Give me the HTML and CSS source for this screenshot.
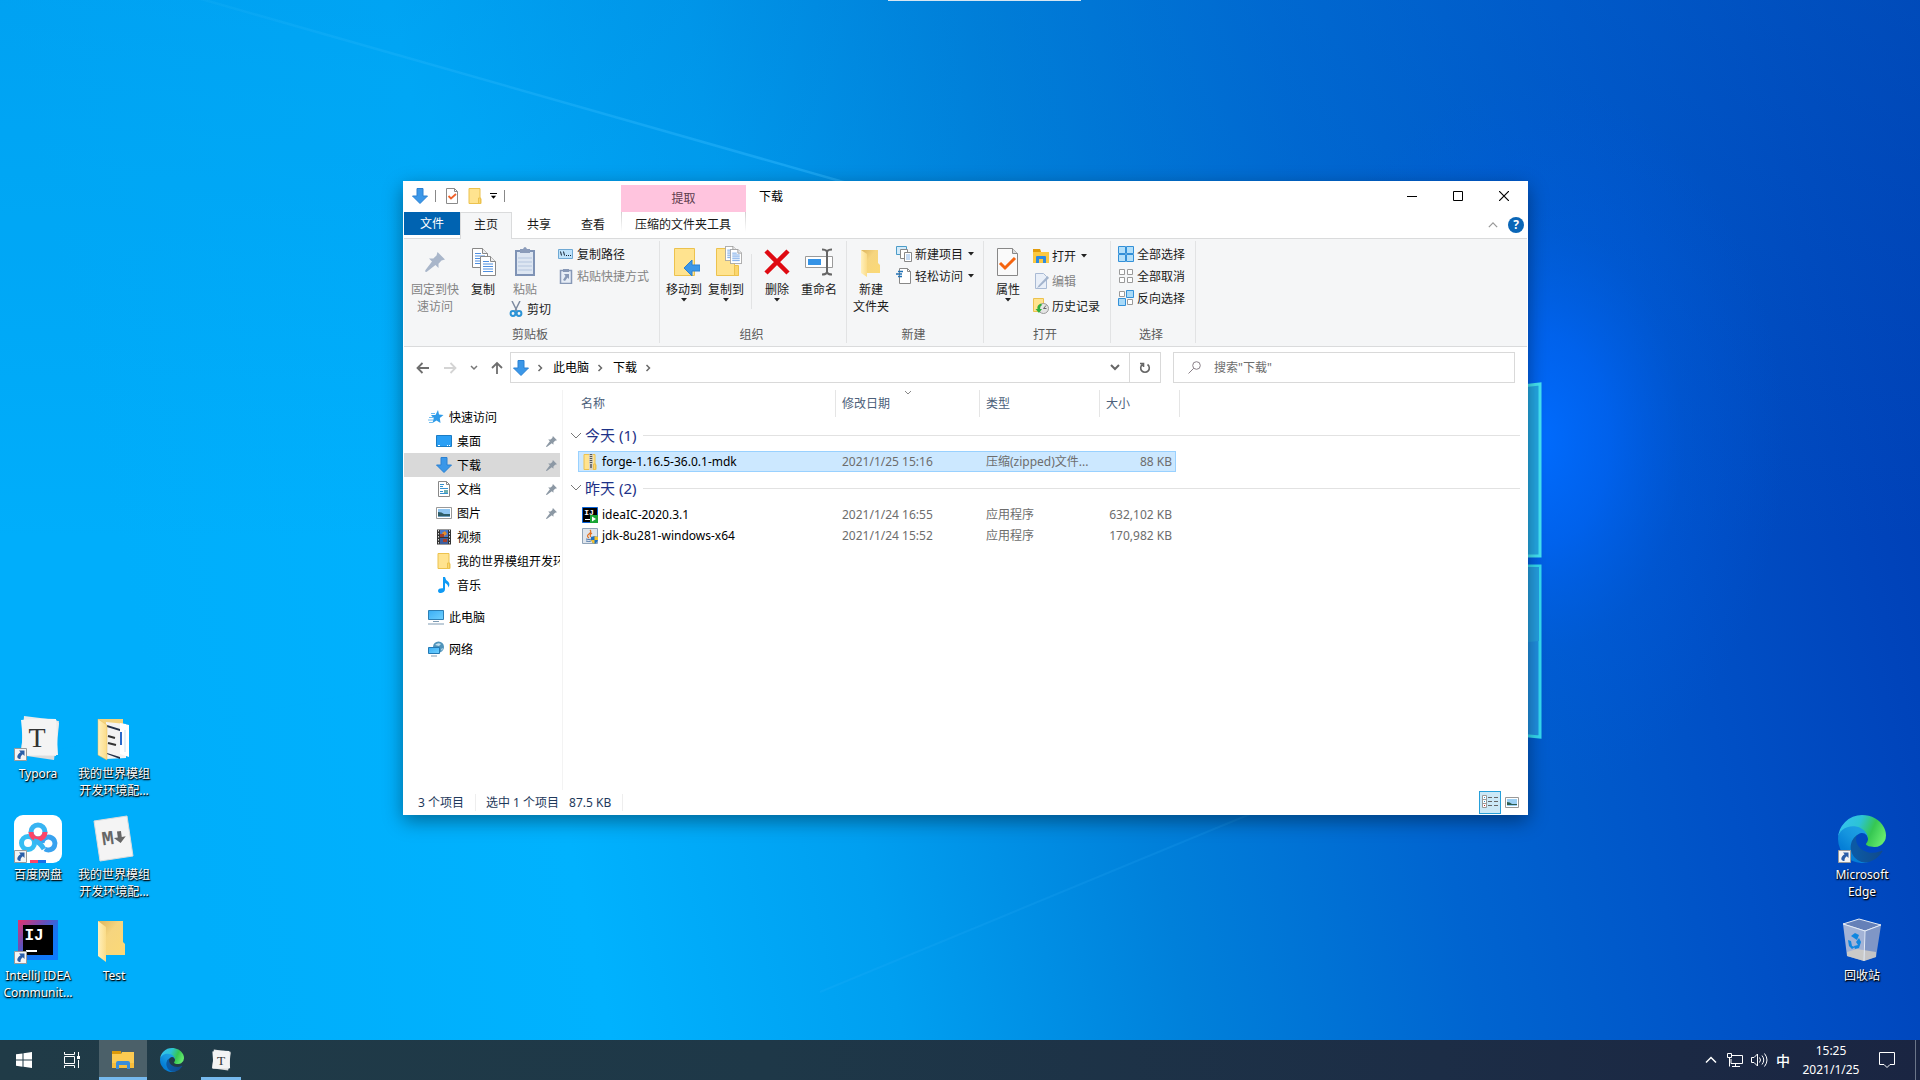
FILE: index.html
```html
<!DOCTYPE html>
<html lang="zh-CN">
<head>
    <meta charset="UTF-8">
    <meta name="viewport" content="width=device-width, initial-scale=1.0">
    <title>下载</title>
    <link rel="stylesheet" href="styles.css">
</head>
<body>

    <!-- Shared icons -->
    <svg class="defs" aria-hidden="true">
        <defs>
            <linearGradient id="gFolderFront" x1="0" y1="0" x2="1" y2="0">
                <stop offset="0" stop-color="#fff0bd"/><stop offset="1" stop-color="#fbdc88"/>
            </linearGradient>
            <linearGradient id="gFolderBack" x1="0" y1="0" x2="1" y2="1">
                <stop offset="0" stop-color="#dcb45c"/><stop offset="0.4" stop-color="#f6d57f"/><stop offset="1" stop-color="#fbd976"/>
            </linearGradient>
            <linearGradient id="gEdge1" x1="0.2" y1="0.5" x2="1" y2="0.5">
                <stop offset="0" stop-color="#0c59a4"/><stop offset="1" stop-color="#114a8b"/>
            </linearGradient>
            <linearGradient id="gEdge2" x1="0.8" y1="0.3" x2="0.3" y2="1">
                <stop offset="0" stop-color="#1b9de2"/><stop offset="0.3" stop-color="#1595df"/><stop offset="0.7" stop-color="#0680d7"/><stop offset="1" stop-color="#0078d4"/>
            </linearGradient>
            <linearGradient id="gEdge3" x1="0" y1="0.3" x2="1" y2="0.6">
                <stop offset="0" stop-color="#35c1f1"/><stop offset="0.4" stop-color="#2cc3d5"/><stop offset="0.7" stop-color="#36c752"/><stop offset="1" stop-color="#66eb6e"/>
            </linearGradient>
            <linearGradient id="gScreen" x1="0" y1="0" x2="1" y2="1">
                <stop offset="0" stop-color="#3aaef5"/><stop offset="1" stop-color="#6fd0ff"/>
            </linearGradient>
            <linearGradient id="gIdea" x1="0" y1="0" x2="1" y2="1">
                <stop offset="0" stop-color="#e8326b"/><stop offset="0.35" stop-color="#6a4fb8"/><stop offset="0.6" stop-color="#1675f0"/><stop offset="1" stop-color="#0a7cff"/>
            </linearGradient>
        </defs>
        <symbol id="i-down" viewBox="0 0 16 16">
            <path d="M5 .5h6V8h4.500L8 15.500.5 8H5z" fill="#3b97e8" stroke="#2a80d2"/>
        </symbol>
        <symbol id="i-folder" viewBox="0 0 16 16">
            <path d="M2 .5h11V10l1 .6v4.900H2z" fill="#ffe38f" stroke="#ecc24e"/>
            <path d="M11.500 15.500V10h2v5.500z" fill="#fbd66e" stroke="#ecc24e"/>
        </symbol>
        <symbol id="i-check" viewBox="0 0 16 16">
            <path d="M2.500 .5h8l3 3v12h-11z" fill="#fff" stroke="#8a8a8a"/>
            <path d="M10.500 .5v3h3" fill="none" stroke="#8a8a8a"/>
            <path d="M4.500 8l2.500 2.500 5-4.500" fill="none" stroke="#f0622a" stroke-width="1.800"/>
        </symbol>
        <symbol id="i-caret" viewBox="0 0 6 4">
            <path d="M0 0h6L3 3.500z" fill="currentColor"/>
        </symbol>
        <symbol id="i-chev" viewBox="0 0 8 8">
            <path d="M2.500 1L5.500 4 2.500 7" fill="none" stroke="#6a6a6a" stroke-width="1.500"/>
        </symbol>
        <symbol id="i-pin" viewBox="0 0 20 20">
            <path d="M12.500 0L20 7.500l-3.500 1-3 3.200 0 4.300-3-3L1.500 20 0 19.500 .5 18 7 9.500 4 6.500h4.300l3.200-3z" fill="currentColor"/>
        </symbol>
        <symbol id="i-page" viewBox="0 0 16 20">
            <path d="M.5.5h10l5 5v14H.5z" fill="#fff" stroke="#888"/>
            <path d="M10.500.5v5h5" fill="#eee" stroke="#888"/>
            <path d="M3 5.500h6M3 8h10M3 10.500h10M3 13h10M3 15.500h10" stroke="#4f8fe0"/>
        </symbol>
        <symbol id="i-edge" viewBox="0 0 256 256">
            <g transform="translate(-4.630 -4.920)">
                <path fill="url(#gEdge1)" d="M235.680 195.460a93.730 93.730 0 0 1-10.540 4.710 101.870 101.870 0 0 1-35.900 6.460c-47.320 0-88.540-32.550-88.540-74.320A31.480 31.480 0 0 1 117.130 105c-42.800 1.800-53.800 46.400-53.800 72.530 0 73.880 68.090 81.370 82.760 81.370 7.910 0 19.840-2.300 27-4.560l1.310-.44a128.340 128.340 0 0 0 66.600-52.800 4 4 0 0 0-5.320-5.640Z"/>
                <path fill="url(#gEdge2)" d="M110.340 246.340A79.200 79.200 0 0 1 87.600 225a80.720 80.720 0 0 1 29.530-120c3.120-1.470 8.450-4.130 15.540-4a32.350 32.350 0 0 1 25.690 13 31.880 31.880 0 0 1 6.360 18.660c0-.21 24.460-79.600-80-79.600-43.900 0-80 41.660-80 78.210a130.150 130.150 0 0 0 12.110 56 128 128 0 0 0 156.380 67.110 75.550 75.550 0 0 1-62.780-8Z"/>
                <path fill="url(#gEdge3)" d="M156.940 153.780c-.81 1.050-3.300 2.500-3.300 5.660 0 2.610 1.700 5.120 4.720 7.230 14.380 10 41.490 8.680 41.560 8.680a59.560 59.560 0 0 0 30.270-8.350 61.380 61.380 0 0 0 30.430-52.880c.26-22.410-8-37.310-11.340-43.910C228.090 28.760 182.350 4.920 132.610 4.920a128 128 0 0 0-128 126.200c.48-36.540 36.800-66.050 80-66.050 3.500 0 23.460.34 42 10.070 16.340 8.580 24.900 18.940 30.850 29.210 6.180 10.670 7.280 24.150 7.280 29.520s-2.740 13.330-7.800 19.910Z"/>
            </g>
        </symbol>
        <symbol id="i-shortcut" viewBox="0 0 13 13">
            <path d="M.5.5h12v12H.5z" fill="#f4f4f4" stroke="#9a9a9a"/>
            <path d="M5 2.500h5.500V8L8.800 6.300C7 7.500 6.500 8.800 6.500 11 5 11 3.500 10.500 3.300 9 3.200 7 4.500 5.500 6.600 4.200z" fill="#2b5ea8"/>
        </symbol>
        <symbol id="i-typora" viewBox="0 0 42 46">
            <path d="M8 3L41 6l-5 39-34-5z" fill="#dcdcdc"/>
            <path d="M3 40L6 1l32 4 3 3-3 33z" fill="#ebebeb"/>
            <path d="M3 5q18-2 35-1 1 18 2 36-18 0-36 1Q5 22 3 5z" fill="#f4f4f4"/>
        </symbol>
        <symbol id="i-explorer" viewBox="0 0 22 18">
            <path d="M0 0h9v4H0z" fill="#dd9a0a"/>
            <path d="M0 3h9l1-2h12v16H0z" fill="#fdcb52"/>
            <path d="M0 12h22v5H0z" fill="#f9bd3a"/>
            <path d="M4 18v-6q0-2 2-2h10q2 0 2 2v6h-3v-4H7v4z" fill="#3a8ddb"/>
        </symbol>
        <symbol id="i-tri" viewBox="0 0 12 8">
            <path d="M1 6.500l5-5 5 5" fill="none" stroke="currentColor" stroke-width="1.500"/>
        </symbol>
    </svg>

    <div class="screen">
        <main class="desktop">
            <!-- Wallpaper -->
            <svg class="wallpaper" viewBox="0 0 1920 1080" preserveAspectRatio="none" aria-hidden="true">
                <defs>
                    <linearGradient id="wBase" x1="0" y1="0" x2="1" y2="-0.120">
                        <stop offset="0" stop-color="#00aefb"/>
                        <stop offset="0.2" stop-color="#00b2fe"/>
                        <stop offset="0.35" stop-color="#009ff0"/>
                        <stop offset="0.5" stop-color="#0080da"/>
                        <stop offset="0.65" stop-color="#0064d0"/>
                        <stop offset="0.8" stop-color="#0050c6"/>
                        <stop offset="0.9" stop-color="#0044bb"/>
                        <stop offset="1" stop-color="#003ab0"/>
                    </linearGradient>
                    <linearGradient id="wTop" x1="0" y1="0" x2="0" y2="1">
                        <stop offset="0" stop-color="#0079d2" stop-opacity="0.25"/>
                        <stop offset="0.5" stop-color="#0079d2" stop-opacity="0"/>
                    </linearGradient>
                    <radialGradient id="wGlow" cx="0.5" cy="0.5" r="0.5">
                        <stop offset="0" stop-color="#006cff"/>
                        <stop offset="0.3" stop-color="#0066fa" stop-opacity="0.7"/>
                        <stop offset="0.6" stop-color="#0060ea" stop-opacity="0.25"/>
                        <stop offset="1" stop-color="#005be0" stop-opacity="0"/>
                    </radialGradient>
                    <linearGradient id="wBeam" x1="0" y1="0" x2="1" y2="0">
                        <stop offset="0" stop-color="#3cc4ff" stop-opacity="0.1"/>
                        <stop offset="1" stop-color="#30b8ff" stop-opacity="0.5"/>
                    </linearGradient>
                </defs>
                <rect width="1920" height="1080" fill="url(#wBase)"/>
                <rect width="1920" height="1080" fill="url(#wTop)"/>
                <path d="M200 0L848 184 860 600 0 760V0z" fill="#00b4ff" opacity="0.08"/>
                <path d="M200 0h9L848 182h-9z" fill="url(#wBeam)"/>
                <path d="M820 992L1260 810" stroke="#38b6ff" stroke-opacity="0.14" stroke-width="2"/>
                <ellipse cx="1535" cy="440" rx="250" ry="360" fill="url(#wGlow)"/>
                <path d="M1250 415L1540 384v172l-290-1z" fill="#24a9e6" stroke="#45e6f5" stroke-width="3"/>
                <path d="M1250 566h290v171l-290-28z" fill="#2090e2" stroke="#35dcf2" stroke-width="3"/>
                <path d="M1520 567h19v74l-19 2z" fill="#259fe2"/>
            </svg>

            <div class="top-strip"></div>

            <section class="icons">
                <a class="shortcut" href="#typora">
                    <svg width="48" height="48" viewBox="0 0 48 48">
                        <use href="#i-typora" x="4" y="1" width="42" height="46"/>
                        <text x="23" y="33" class="serif-letter" font-size="28">T</text>
                        <use href="#i-shortcut" y="34" width="13" height="13"/>
                    </svg>
                    <span>Typora</span>
                </a>
                <a class="shortcut" href="#docs">
                    <svg width="48" height="48" viewBox="0 0 48 48">
                        <path d="M8 5h25v36H8z" fill="#f3d37e"/>
                        <path d="M16 8l20 2v34l-20 1z" fill="#f3f3f3"/>
                        <path d="M30 9l9 2v32l-9-3z" fill="#fff"/>
                        <path d="M17 11l13 4v2l-13-4zM17 39l13 4v2l-13-5z" fill="#22304a"/>
                        <path d="M18 22l7 2M18 29l8 2" stroke="#333" stroke-width="2"/>
                        <path d="M31 18v13" stroke="#2c68c8" stroke-width="2"/><path d="M35 16v22" stroke="#c4e1f7"/>
                        <path d="M8 5l9 6v35l-9-5z" fill="url(#gFolderFront)" stroke="#e6bd5f" stroke-width=".5"/>
                    </svg>
                    <span>我的世界模组开发环境配...</span>
                </a>
                <a class="shortcut" href="#pan">
                    <svg width="48" height="48" viewBox="0 0 48 48">
                        <rect width="48" height="48" rx="9" fill="#fff"/>
                        <g fill="none" stroke-width="5">
                            <circle cx="14" cy="28" r="6.500" stroke="#35bdf3"/>
                            <path d="M28 28a6.500 6.500 0 1 1 3 6" stroke="#38a2ef"/>
                            <circle cx="24" cy="17" r="7" stroke="#38b4f2"/>
                            <path d="M17 17a7 7 0 0 0 14 0" stroke="#fb4568"/>
                            <path d="M20 26q5 0 10 8" stroke="#38b4f2"/>
                        </g>
                        <path d="M16 45h8v3h-8z" fill="#fb4568"/><path d="M24 45h8v3h-8z" fill="#1a6fe8"/>
                        <use href="#i-shortcut" y="35" width="13" height="13"/>
                    </svg>
                    <span>百度网盘</span>
                </a>
                <a class="shortcut" href="#md">
                    <svg width="48" height="48" viewBox="0 0 48 48">
                        <path d="M4 6L37 1l6 40-33 5z" fill="#f4f4f4" stroke="#dcdcdc"/>
                        <g transform="rotate(-8 24 24)">
                            <text x="18" y="29" class="mono-letter" font-size="20" fill="#666">M</text>
                            <path d="M28 17h4v6h4l-6 6-6-6h4z" fill="#666"/>
                        </g>
                    </svg>
                    <span>我的世界模组开发环境配...</span>
                </a>
                <a class="shortcut" href="#idea">
                    <svg width="48" height="48" viewBox="0 0 48 48">
                        <rect x="4" y="4" width="40" height="40" fill="url(#gIdea)"/>
                        <rect x="9" y="9" width="30" height="30" fill="#000"/>
                        <text x="20" y="24" class="mono-letter" font-size="16" fill="#fff">IJ</text>
                        <path d="M12 34h11v2H12z" fill="#fff"/>
                        <use href="#i-shortcut" y="35" width="13" height="13"/>
                    </svg>
                    <span>IntelliJ IDEA Communit...</span>
                </a>
                <a class="shortcut" href="#test">
                    <svg width="48" height="48" viewBox="0 0 48 48">
                        <path d="M8 5h25v21l2 2v11H16z" fill="url(#gFolderBack)"/>
                        <path d="M8 5l8 6v35l-8-6z" fill="url(#gFolderFront)"/>
                    </svg>
                    <span>Test</span>
                </a>
            </section>

            <section class="icons icons-right">
                <a class="shortcut" href="#edge">
                    <svg width="48" height="48" viewBox="0 0 48 48">
                        <use href="#i-edge" width="48" height="48"/>
                        <use href="#i-shortcut" y="35" width="13" height="13"/>
                    </svg>
                    <span>Microsoft Edge</span>
                </a>
                <a class="shortcut" href="#bin">
                    <svg width="48" height="48" viewBox="0 0 48 48">
                        <path d="M5 8l16-5 22 6-16 6z" fill="#6580b8" stroke="#e4ebf6"/>
                        <path d="M5 8l22 7-1 30-17-5z" fill="#a3b3d6"/>
                        <path d="M27 15l16-6-5 32-12 4z" fill="#7f96c6"/>
                        <path d="M9 36l10-3 19 3v5l-12 4-17-5z" fill="#d0cdc6" opacity=".85"/>
                        <path d="M5 8l22 7 16-6M27 15l-1 30" fill="none" stroke="#e4ebf6"/>
                        <path d="M13 20l4-3 4 2-2 5-3-2zM10 24l3 1 1 5 3 1-3 2-3-3zM21 22l2 4-2 6-4 1-1-3 4-1-2-3z" fill="#0f86e0"/>
                    </svg>
                    <span>回收站</span>
                </a>
            </section>

            <!-- Explorer window -->
            <section class="window">
                <header class="window-head">
                    <div class="quick-bar">
                        <svg width="16" height="16"><use href="#i-down"/></svg>
                        <i class="bar-line"></i>
                        <button aria-label="属性"><svg width="16" height="16"><use href="#i-check"/></svg></button>
                        <button aria-label="新建文件夹"><svg width="16" height="16"><use href="#i-folder"/></svg></button>
                        <button aria-label="自定义快速访问工具栏"><svg width="7" height="7" viewBox="0 0 8 8"><path d="M0 0h8v1H0zM1 3h6L4 6.500z"/></svg></button>
                        <i class="bar-line"></i>
                    </div>
                    <div class="context-title">提取</div>
                    <div class="title-row">
                        <h1>下载</h1>
                        <div class="window-buttons">
                            <button aria-label="最小化"><svg width="10" height="10" viewBox="0 0 10 10"><path d="M0 5.500h10" stroke="#000"/></svg></button>
                            <button aria-label="最大化"><svg width="10" height="10" viewBox="0 0 10 10"><path d="M.5.5h9v9h-9z" fill="none" stroke="#000"/></svg></button>
                            <button aria-label="关闭"><svg width="10" height="10" viewBox="0 0 10 10"><path d="M0 0l10 10M10 0L0 10" stroke="#000" stroke-width="1.200"/></svg></button>
                        </div>
                    </div>
                    <div class="tabs">
                        <button class="tab tab-file">文件</button>
                        <button class="tab tab-active">主页</button>
                        <button class="tab">共享</button>
                        <button class="tab">查看</button>
                    </div>
                    <button class="context-tab">压缩的文件夹工具</button>
                    <div class="ribbon-tools">
                        <button aria-label="折叠功能区"><svg width="10" height="8" viewBox="0 0 12 8" class="soft"><use href="#i-tri"/></svg></button>
                        <button class="help" aria-label="帮助">?</button>
                    </div>
                </header>

                <div class="ribbon">
                    <div class="group">
                        <div class="group-body">
                            <button class="big big-wide" disabled>
                                <svg width="32" height="32" viewBox="0 0 32 32" class="pin-big"><use href="#i-pin" x="6" y="6" width="20" height="20"/></svg>
                                <span>固定到快速访问</span>
                            </button>
                            <button class="big">
                                <svg width="32" height="32" viewBox="0 0 32 32"><use href="#i-page" x="5" y="2" width="16" height="20"/><use href="#i-page" x="13" y="10" width="16" height="20"/></svg>
                                <span>复制</span>
                            </button>
                            <div class="paste">
                                <button class="big" disabled>
                                    <svg width="32" height="32" viewBox="0 0 32 32"><path d="M7 5h18v24H7z" fill="#dde6f2" stroke="#7f93b5" stroke-width="2"/><path d="M9 12h14M9 16h14M9 20h14M9 24h14" stroke="#b4c5de"/><path d="M11 3h3q2-4 4 0h3v4H11z" fill="#8b9cba"/></svg>
                                    <span>粘贴</span>
                                </button>
                                <button class="small">
                                    <svg width="16" height="16" viewBox="0 0 16 16"><path d="M4 0l5 10M12 0L7 10" stroke="#7d8ba0" stroke-width="1.500"/><g fill="none" stroke="#2b93d6" stroke-width="2"><circle cx="5" cy="12.500" r="2.400"/><circle cx="11" cy="12.500" r="2.400"/></g></svg>
                                    <span>剪切</span>
                                </button>
                            </div>
                            <div class="stack">
                                <button class="small">
                                    <svg width="16" height="16" viewBox="0 0 16 16"><path d="M.5 3.500h14v9H.5z" fill="#bfe3fb" stroke="#6fa9d4"/><path d="M2.500 5.500l1 4M5.500 5.500l1 4M8 9.500h1M10 9.500h1M12 9.500h1" fill="none" stroke="#123"/></svg>
                                    <span>复制路径</span>
                                </button>
                                <button class="small" disabled>
                                    <svg width="16" height="16" viewBox="0 0 16 16"><path d="M2.500 2.500h11v13h-11z" fill="#e6edf6" stroke="#8798b6" stroke-width="1.500"/><path d="M5 1h6v3H5z" fill="#8798b6"/><path d="M6 6h5v5L9.500 9.500 7 13 5 12l2.500-4z" fill="#8798b6"/></svg>
                                    <span>粘贴快捷方式</span>
                                </button>
                            </div>
                        </div>
                        <div class="group-name">剪贴板</div>
                    </div>

                    <div class="group">
                        <div class="group-body">
                            <button class="big">
                                <svg width="32" height="32" viewBox="0 0 32 32"><path d="M6.500 2.500h20v27h-20z" fill="#ffe38f" stroke="#ecc24e"/><path d="M32 19v6h-8v5l-8-8 8-8v5z" fill="#3b97e8" stroke="#2a80d2"/></svg>
                                <span>移动到</span>
                                <svg class="caret" width="6" height="4"><use href="#i-caret"/></svg>
                            </button>
                            <button class="big">
                                <svg width="32" height="32" viewBox="0 0 32 32"><path d="M6.500 2.500h18v17l4 1v9h-22z" fill="#ffe38f" stroke="#ecc24e"/><path d="M24.500 29.500v-10h4v10z" fill="#fbd66e" stroke="#ecc24e"/><use href="#i-page" x="15" width="12" height="15"/><use href="#i-page" x="20" y="3" width="12" height="15"/></svg>
                                <span>复制到</span>
                                <svg class="caret" width="6" height="4"><use href="#i-caret"/></svg>
                            </button>
                            <i class="inner-line"></i>
                            <button class="big">
                                <svg width="32" height="32" viewBox="0 0 32 32"><path d="M5 5l22 22M27 5L5 27" stroke="#df0a12" stroke-width="4.500"/></svg>
                                <span>删除</span>
                                <svg class="caret" width="6" height="4"><use href="#i-caret"/></svg>
                            </button>
                            <button class="big">
                                <svg width="32" height="32" viewBox="0 0 32 32"><path d="M2.500 10.500h27v11h-27z" fill="#fff" stroke="#9a9a9a"/><path d="M5 13h13v6H5z" fill="#3593e6"/><path d="M24 4.500v23M19 3.500q4 0 5 2 1-2 5-2M19 28.500q4 0 5-2 1 2 5 2" fill="none" stroke="#666" stroke-width="2"/></svg>
                                <span>重命名</span>
                            </button>
                        </div>
                        <div class="group-name">组织</div>
                    </div>

                    <div class="group">
                        <div class="group-body">
                            <button class="big">
                                <svg width="32" height="32" viewBox="0 0 32 32"><path d="M6 4h17v13l2 2v8H12z" fill="url(#gFolderBack)"/><path d="M6 4l6 4v23l-6-4z" fill="url(#gFolderFront)"/></svg>
                                <span>新建<br>文件夹</span>
                            </button>
                            <div class="stack">
                                <button class="small">
                                    <svg width="16" height="16" viewBox="0 0 16 16"><path d="M.5.5h10v8H.5z" fill="#d3ebfa" stroke="#4c9cc8"/><path d="M4.500 3.500h7v9h-7z" fill="#fff" stroke="#888"/><path d="M8.500 6.500h7v9h-7z" fill="#fff" stroke="#888"/><path d="M10 9h4M10 11h4M10 13h4" stroke="#8ab6e8"/></svg>
                                    <span>新建项目</span>
                                    <svg class="caret" width="6" height="4"><use href="#i-caret"/></svg>
                                </button>
                                <button class="small">
                                    <svg width="16" height="16" viewBox="0 0 16 16"><path d="M3.500.5h8l3 3v12h-11z" fill="#fff" stroke="#888"/><path d="M11.500.5v3h3" fill="none" stroke="#888"/><path d="M2 3.500h5M0 6h6M2 8.500h4" stroke="#2272b4" stroke-width="1.500"/></svg>
                                    <span>轻松访问</span>
                                    <svg class="caret" width="6" height="4"><use href="#i-caret"/></svg>
                                </button>
                            </div>
                        </div>
                        <div class="group-name">新建</div>
                    </div>

                    <div class="group group-roomy">
                        <div class="group-body">
                            <button class="big">
                                <svg width="32" height="32" viewBox="0 0 32 32"><path d="M5.500 2.500h15l5 5v22h-20z" fill="#fafafa" stroke="#888"/><path d="M20.500 2.500v5h5" fill="#ddd" stroke="#888"/><path d="M8 17l5 5L23 12" fill="none" stroke="#f5640f" stroke-width="3"/></svg>
                                <span>属性</span>
                                <svg class="caret" width="6" height="4"><use href="#i-caret"/></svg>
                            </button>
                            <div class="stack stack-loose">
                                <button class="small">
                                    <svg width="16" height="16" viewBox="0 0 16 16"><path d="M0 1h7l1 3h8v11H0z" fill="#fdc83f"/><path d="M0 1h7l1 3H0z" fill="#e29c0c"/><path d="M3 15V9q0-1 1-1h8q1 0 1 1v6h-3v-4H6v4z" fill="#2f8be0"/></svg>
                                    <span>打开</span>
                                    <svg class="caret" width="6" height="4"><use href="#i-caret"/></svg>
                                </button>
                                <button class="small" disabled>
                                    <svg width="16" height="16" viewBox="0 0 16 16"><path d="M2.500.5h8l3 3v12h-11z" fill="#e9eff8" stroke="#a9bad4"/><path d="M14.500 3L6 12l-2 3 3-1.500L16 5z" fill="#a3b4cd"/></svg>
                                    <span>编辑</span>
                                </button>
                                <button class="small">
                                    <svg width="16" height="16" viewBox="0 0 16 16"><path d="M.5.5h10v13H.5z" fill="#ffe38f" stroke="#ecc24e"/><circle cx="10.500" cy="10.500" r="5" fill="#e4e4e4" stroke="#999"/><path d="M10.500 10.500l2.500-3M10.500 10.500h3" stroke="#666"/><path d="M8 5.500Q3.500 7 4.500 11H2.500l3.500 4 3-4H7q0-3 2-4z" fill="#2fae3c"/></svg>
                                    <span>历史记录</span>
                                </button>
                            </div>
                        </div>
                        <div class="group-name">打开</div>
                    </div>

                    <div class="group group-roomy">
                        <div class="group-body">
                            <div class="stack">
                                <button class="small">
                                    <svg width="16" height="16" viewBox="0 0 16 16"><path d="M.5.5h7v7h-7zM8.500.5h7v7h-7zM.5 8.500h7v7h-7zM8.500 8.500h7v7h-7z" fill="#b4e0fa" stroke="#3390d8"/></svg>
                                    <span>全部选择</span>
                                </button>
                                <button class="small">
                                    <svg width="16" height="16" viewBox="0 0 16 16"><path d="M1.500 1.500h5v5h-5zM9.500 1.500h5v5h-5zM1.500 9.500h5v5h-5zM9.500 9.500h5v5h-5z" fill="#fff" stroke="#9a9a9a"/></svg>
                                    <span>全部取消</span>
                                </button>
                                <button class="small">
                                    <svg width="16" height="16" viewBox="0 0 16 16"><path d="M1.500 1.500h5v5h-5zM9.500 9.500h5v5h-5z" fill="#fff" stroke="#9a9a9a"/><path d="M8.500.5h7v7h-7zM.5 8.500h7v7h-7z" fill="#a9daf8" stroke="#3390d8"/></svg>
                                    <span>反向选择</span>
                                </button>
                            </div>
                        </div>
                        <div class="group-name">选择</div>
                    </div>
                </div>

                <div class="address-row">
                    <div class="history">
                        <button aria-label="后退"><svg width="14" height="12" viewBox="0 0 14 12"><path d="M13 6H2M6.500 1L1.500 6l5 5" fill="none" stroke="#6e6e6e" stroke-width="1.800"/></svg></button>
                        <button aria-label="前进"><svg width="14" height="12" viewBox="0 0 14 12"><path d="M1 6h11M7.500 1l5 5-5 5" fill="none" stroke="#d4d4d4" stroke-width="1.800"/></svg></button>
                        <button aria-label="最近位置"><svg width="8" height="6" viewBox="0 0 8 6"><path d="M1 1l3 3 3-3" fill="none" stroke="#777" stroke-width="1.500"/></svg></button>
                        <button aria-label="向上"><svg width="12" height="14" viewBox="0 0 12 14"><path d="M6 13V2M1 7l5-5 5 5" fill="none" stroke="#6e6e6e" stroke-width="1.800"/></svg></button>
                    </div>
                    <nav class="address">
                        <svg width="16" height="16"><use href="#i-down"/></svg>
                        <svg class="crumb-sep" width="8" height="8"><use href="#i-chev"/></svg>
                        <button>此电脑</button>
                        <svg class="crumb-sep" width="8" height="8"><use href="#i-chev"/></svg>
                        <button>下载</button>
                        <svg class="crumb-sep" width="8" height="8"><use href="#i-chev"/></svg>
                        <button class="address-drop" aria-label="上一个位置"><svg width="10" height="7" viewBox="0 0 10 7"><path d="M1 1l4 4 4-4" fill="none" stroke="#666" stroke-width="2"/></svg></button>
                        <button class="address-refresh" aria-label="刷新"><svg width="12" height="12" viewBox="0 0 12 12"><path d="M8.500 2.500A4.300 4.300 0 1 1 3.500 2.500M4.500 5V1.500H1" fill="none" stroke="#666" stroke-width="1.600"/></svg></button>
                    </nav>
                    <label class="search">
                        <svg width="13" height="13" viewBox="0 0 13 13"><circle cx="8.500" cy="4.500" r="3.800" fill="none" stroke="#8a8088"/><path d="M5.700 7.300L.5 12.500" stroke="#8a8088"/></svg>
                        <input type="text" placeholder='搜索"下载"' aria-label="搜索">
                    </label>
                </div>

                <div class="content">
                    <nav class="tree">
                        <a class="root" href="#quick"><svg width="16" height="16" viewBox="0 0 16 16"><path d="M10 1l1 4.500 4.500.4-3.700 3.200.7 5L8.500 11.500 4.500 14l1.200-4.800L3 6h4.500z" fill="#2f9be8"/><path d="M3 4.500h4M1 8.500h5M0 11h5M1 13.500h4" stroke="#6ebcf0"/></svg>快速访问</a>
                        <a href="#desktop"><svg width="16" height="16" viewBox="0 0 16 16"><path d="M.5 2.500h15v11H.5z" fill="#2a9ff5" stroke="#1b7cc4"/><path d="M2 12.500h2M11 12.500h1M13 12.500h1" stroke="#fff"/></svg>桌面<svg class="pin" width="11" height="11"><use href="#i-pin"/></svg></a>
                        <a class="current" href="#downloads"><svg width="16" height="16"><use href="#i-down"/></svg>下载<svg class="pin" width="11" height="11"><use href="#i-pin"/></svg></a>
                        <a href="#documents"><svg width="16" height="16" viewBox="0 0 16 16"><path d="M2.500.5h8l3 3v12h-11z" fill="#fff" stroke="#888"/><path d="M10.500.5v3h3" fill="none" stroke="#888"/><path d="M4 3.500h4M4 5.500h3M4 7.500h8M4 10.500h3M4 12.500h8" stroke="#3592d0"/><path d="M8 9h4v3H8z" fill="#6fb0b0"/></svg>文档<svg class="pin" width="11" height="11"><use href="#i-pin"/></svg></a>
                        <a href="#pictures"><svg width="16" height="16" viewBox="0 0 16 16"><path d="M.5 2.500h15v11H.5z" fill="#fff" stroke="#999"/><path d="M2 4h12v8H2z" fill="#8fc6f2"/><path d="M2 7q4 0 6 2 3 0 6 0v2H2z" fill="#2e5c66"/><path d="M2 11h12v1H2z" fill="#6f9fc0"/></svg>图片<svg class="pin" width="11" height="11"><use href="#i-pin"/></svg></a>
                        <a href="#videos"><svg width="16" height="16" viewBox="0 0 16 16"><path d="M1 .5h14v15H1z" fill="#333"/><path d="M4 1h8v7H4z" fill="#4a78c8"/><path d="M4 9h8v6H4z" fill="#3c5f9e"/><path d="M6 4l3-2 2 3-3 2z" fill="#e88d25"/><path d="M4 5h4v3H4zM7 10h4v3H7z" fill="#a53f2a"/><path d="M2.500 1v14M13.500 1v14" stroke="#ddd" stroke-dasharray="1.500 1.500"/></svg>视频</a>
                        <a href="#folder"><svg width="16" height="16"><use href="#i-folder"/></svg>我的世界模组开发环</a>
                        <a href="#music"><svg width="16" height="16" viewBox="0 0 16 16"><path d="M7 0h2q.5 3 3 4.500 2.500 2 .5 6Q12 7 9 6v6q0 3.500-4 4-3 0-3-2.300Q2.500 11 7 11.300z" fill="#0f9af5"/></svg>音乐</a>
                        <a class="root spaced" href="#pc"><svg width="16" height="16" viewBox="0 0 16 16"><path d="M.5 1.500h15v9H.5z" fill="url(#gScreen)" stroke="#2c7fb5"/><path d="M5 12.500h6M0 15h16" stroke="#7e9bb3"/></svg>此电脑</a>
                        <a class="root spaced" href="#network"><svg width="16" height="16" viewBox="0 0 16 16"><circle cx="10.500" cy="6" r="5.500" fill="#4f93ba"/><path d="M7 4q3-3 6-1l-2 2zM13 8l2-1-1 3z" fill="#c3e0ee"/><path d="M.5 6.500h11v6H.5z" fill="url(#gScreen)" stroke="#2379b4"/><path d="M3 15h6" stroke="#7e9bb3"/></svg>网络</a>
                    </nav>

                    <div class="files">
                        <table>
                            <colgroup>
                                <col class="c-lead"><col class="c-name"><col class="c-date"><col class="c-type"><col class="c-size"><col class="c-gap"><col>
                            </colgroup>
                            <thead>
                                <tr>
                                    <td></td>
                                    <th scope="col">名称</th>
                                    <th scope="col">修改日期<svg class="sort" width="8" height="5" viewBox="0 0 8 5"><path d="M1 1l3 3 3-3" fill="none" stroke="#888"/></svg></th>
                                    <th scope="col">类型</th>
                                    <th scope="col" class="no-line">大小</th>
                                    <td class="line"></td>
                                    <td></td>
                                </tr>
                            </thead>
                            <tbody>
                                <tr class="date-group date-first">
                                    <th colspan="7" scope="rowgroup"><div><svg width="12" height="8" viewBox="0 0 12 8"><path d="M1 1l5 5 5-5" fill="none" stroke="#777"/></svg>今天 (1)</div></th>
                                </tr>
                                <tr class="selected">
                                    <td></td>
                                    <td class="name"><svg width="16" height="16" viewBox="0 0 16 16"><use href="#i-folder"/><path d="M7 0h4v16H7z" fill="#d8d4c4"/><path d="M9 0v10" stroke="#555" stroke-width="2.500" stroke-dasharray="1 1"/><path d="M8 10h2v4H8z" fill="#777"/></svg>forge-1.16.5-36.0.1-mdk</td>
                                    <td>2021/1/25 15:16</td>
                                    <td>压缩(zipped)文件...</td>
                                    <td class="size">88 KB</td>
                                    <td></td>
                                    <td></td>
                                </tr>
                            </tbody>
                            <tbody>
                                <tr class="date-group">
                                    <th colspan="7" scope="rowgroup"><div><svg width="12" height="8" viewBox="0 0 12 8"><path d="M1 1l5 5 5-5" fill="none" stroke="#777"/></svg>昨天 (2)</div></th>
                                </tr>
                                <tr>
                                    <td></td>
                                    <td class="name"><svg width="16" height="16" viewBox="0 0 16 16"><path d="M.5.5h15v15H.5z" fill="#000" stroke="#0a63d8"/><text x="7" y="8" class="mono-letter" font-size="8" fill="#fff">IJ</text><path d="M3 12h5v1H3z" fill="#fff"/><path d="M8 8h8v8H8z" fill="#19a534"/><path d="M10 9.500l4 2.500-4 2.500z" fill="#fff"/></svg>ideaIC-2020.3.1</td>
                                    <td>2021/1/24 16:55</td>
                                    <td>应用程序</td>
                                    <td class="size">632,102 KB</td>
                                    <td></td>
                                    <td></td>
                                </tr>
                                <tr>
                                    <td></td>
                                    <td class="name"><svg width="16" height="16" viewBox="0 0 16 16"><path d="M.5.5h15v15H.5z" fill="#dfe5ec" stroke="#8fa3b8"/><path d="M8 2q2 2-1 4t0 4M10 5q-3 2-1 4" fill="none" stroke="#e4701e" stroke-width="1.200"/><path d="M4 11q3 1 6 0M4 13q3 1 5 0" fill="none" stroke="#4f77a8"/><path d="M9 9l3.500-1L16 9v3q-1 3-3.500 4Q10 15 9 12z" fill="#1d6fc0"/><path d="M12.500 8L16 9v3h-3.500zM9 12h3.500v4Q10 15 9 12z" fill="#f5c12c"/></svg>jdk-8u281-windows-x64</td>
                                    <td>2021/1/24 15:52</td>
                                    <td>应用程序</td>
                                    <td class="size">170,982 KB</td>
                                    <td></td>
                                    <td></td>
                                </tr>
                            </tbody>
                        </table>
                    </div>
                </div>

                <footer class="status">
                    <span class="status-count">3 个项目</span>
                    <span>选中 1 个项目</span>
                    <span class="status-size">87.5 KB</span>
                    <div class="views">
                        <button class="view-on" aria-label="详细信息"><svg width="16" height="14" viewBox="0 0 16 14"><path d="M.5.5h4v12h-4zM.5 4.500h4M.5 8.500h4" fill="#fff" stroke="#999"/><path d="M2 2h1v1H2zM2 6h1v1H2z" fill="#39c"/><path d="M2 10h1v1H2z" fill="#c22"/><path d="M6 2.500h4M12 2.500h4M6 6.500h4M12 6.500h4M6 10.500h4M12 10.500h4" stroke="#666"/></svg></button>
                        <button aria-label="大图标"><svg width="14" height="11" viewBox="0 0 14 11"><path d="M.5.5h13v10H.5z" fill="#fff" stroke="#999"/><path d="M2 2h10v7H2z" fill="#9cd0f4"/><path d="M2 5q3 0 5 2 3 0 5 0v1H2z" fill="#2d5c50"/></svg></button>
                    </div>
                </footer>
            </section>
        </main>

        <!-- Taskbar -->
        <footer class="taskbar">
            <div class="task-buttons">
                <button aria-label="开始"><svg width="16" height="16" viewBox="0 0 16 16"><path d="M0 2.300L6.500 1.400v6.200H0zM7.500 1.200L16 0v7.600H7.500zM0 8.500h6.500v6.200L0 13.800zM7.500 8.500H16V16l-8.500-1.200z" fill="#fff"/></svg></button>
                <button aria-label="任务视图"><svg width="16" height="16" viewBox="0 0 16 16"><path d="M.5 0v2.500h10V0M.5 16v-2.500h10V16M.5 4.500h10v7H.5zM14.500 0v4M14.500 8v8" fill="none" stroke="#fff"/><path d="M13 4h3v3h-3z" fill="#fff"/></svg></button>
                <button class="task-active" aria-label="文件资源管理器"><svg width="22" height="18"><use href="#i-explorer"/></svg></button>
                <button aria-label="Microsoft Edge"><svg width="24" height="24"><use href="#i-edge"/></svg></button>
                <button class="task-open" aria-label="Typora"><svg width="22" height="22" viewBox="0 0 42 46"><use href="#i-typora"/><text x="21" y="33" class="serif-letter" font-size="28">T</text></svg></button>
            </div>
            <div class="tray">
                <button aria-label="显示隐藏的图标"><svg width="12" height="8"><use href="#i-tri"/></svg></button>
                <button aria-label="网络"><svg width="16" height="14" viewBox="0 0 16 14"><path d="M5 2.500h10.500v8H4V6M8.500 10.500v2.500M5 13.500h8M.5.500h4v4h-4zM2.500 4.500v9" fill="none" stroke="#fff"/></svg></button>
                <button aria-label="音量"><svg width="17" height="14" viewBox="0 0 17 14"><path d="M.5 4.500h2.500L6.500 1v12L3 9.500H.5zM8.500 4.500q2 2.500 0 5M11 2.500q3.500 4.500 0 9M13.500.5q5 6.500 0 13" fill="none" stroke="#fff"/></svg></button>
                <button class="ime">中</button>
                <button class="clock"><time>15:25</time><time>2021/1/25</time></button>
                <button class="notice" aria-label="通知"><svg width="16" height="16" viewBox="0 0 16 16"><path d="M.5.5h15v12H11L8 15.500 5 12.500H.5z" fill="none" stroke="#fff"/></svg></button>
                <button class="peek" aria-label="显示桌面"></button>
            </div>
        </footer>
    </div>

</body>
</html>
```
FILE: styles.css
```css
* {
    box-sizing: border-box;
}

body {
    margin: 0;
    font-family: "Noto Sans", "Noto Sans CJK SC", sans-serif;
    font-size: 12px;
    line-height: 17px;
    color: #1a1a1a;
    overflow: hidden;
}

button {
    margin: 0;
    padding: 0;
    border: none;
    background: none;
    font: inherit;
    color: inherit;
}

a {
    color: inherit;
    text-decoration: none;
}

svg {
    display: block;
    flex: none;
}

.defs {
    position: absolute;
    width: 0;
    height: 0;
}

.serif-letter {
    font-family: "Liberation Serif", serif;
    text-anchor: middle;
    fill: #333;
}

.mono-letter {
    font-family: "Liberation Mono", monospace;
    font-weight: bold;
    text-anchor: middle;
}

.screen {
    display: flex;
    flex-direction: column;
    height: 100vh;
}

/* Desktop */
.desktop {
    position: relative;
    flex: 1;
    display: flex;
    justify-content: space-between;
    align-items: flex-end;
    padding: 0 20px 23px 0;
    min-height: 0;
}

.wallpaper {
    position: absolute;
    top: 0;
    left: 0;
    width: 100vw;
    height: 100vh;
}

.top-strip {
    position: absolute;
    top: 0;
    right: 839px;
    left: 888px;
    height: 1px;
    background: #d6e6f2;
}

.icons {
    position: relative;
    display: grid;
    grid-template-columns: 76px 76px;
    grid-auto-rows: 101px;
}

.icons-right {
    grid-template-columns: 76px;
}

.shortcut {
    display: flex;
    flex-direction: column;
    align-items: center;
    gap: 3px;
    color: #fff;
    text-align: center;
}

.shortcut span {
    width: 76px;
    padding: 0 1px;
    text-shadow: 1px 1px 1px #000, 0 1px 2px #000;
}

/* Explorer window */
.window {
    position: absolute;
    top: 181px;
    right: 392px;
    bottom: 225px;
    left: 403px;
    display: flex;
    flex-direction: column;
    padding: 1px;
    background: #fff;
    box-shadow: 0 6px 18px rgba(0, 0, 0, 0.4);
}

.window-head {
    display: grid;
    grid-template-columns: 217px auto 1fr;
    grid-template-rows: 30px 27px;
    background: linear-gradient(#dadbdc, #dadbdc) bottom / 100% 1px no-repeat;
}

.quick-bar {
    display: flex;
    align-items: center;
    gap: 7px;
    padding: 0 0 2px 8px;
}

.bar-line {
    width: 1px;
    height: 12px;
    margin-right: 1px;
    background: #888;
}

.context-title {
    margin-top: 3px;
    padding-top: 5px;
    background: #ffc4de;
    color: #5c3b4b;
    text-align: center;
}

.title-row {
    display: flex;
    justify-content: space-between;
    align-items: center;
    padding: 0 0 2px 13px;
}

.title-row h1 {
    margin: 0;
    font-size: 12px;
    font-weight: normal;
    color: #000;
}

.window-buttons {
    display: flex;
    align-self: stretch;
}

.window-buttons button {
    display: grid;
    place-items: center;
    width: 46px;
}

.tabs {
    display: flex;
}

.tab {
    padding: 0 15px 3px;
}

.tab-file {
    height: 23px;
    padding: 0 16px;
    background: #0063b1;
    color: #fff;
}

.tab-active {
    padding: 0 13px 4px;
    border: 1px solid #dadbdc;
    border-bottom: none;
    background: #f5f6f7;
}

.context-tab {
    padding: 0 15px 3px 14px;
    background:
        linear-gradient(#d0d0d0, #fff) left top / 1px 20px no-repeat,
        linear-gradient(#d0d0d0, #fff) right top / 1px 20px no-repeat;
}

.ribbon-tools {
    display: flex;
    justify-content: flex-end;
    align-items: center;
    gap: 10px;
    padding: 0 3px 2px 0;
}

.soft {
    color: #999;
}

.help {
    width: 16px;
    height: 16px;
    border-radius: 50%;
    background: #0a66b7;
    color: #fff;
    font-weight: bold;
    line-height: 16px;
}

.ribbon {
    display: flex;
    padding: 2px 0 3px;
    border-bottom: 1px solid #dadbdc;
    background: #f5f6f7;
}

.group {
    display: flex;
    flex-direction: column;
    justify-content: space-between;
    height: 102px;
    padding: 0 6px 0 3px;
    border-right: 1px solid #e2e3e4;
}

.group:first-child {
    padding: 0 7px 0 4px;
}

.group-roomy {
    padding-right: 7px;
}

.group-body {
    display: flex;
}

.group-name {
    color: #5a5a5a;
    text-align: center;
}

.big {
    display: flex;
    flex-direction: column;
    align-items: center;
    width: 42px;
    padding-top: 5px;
}

.big span {
    margin-top: 3px;
    white-space: nowrap;
}

.big-wide {
    width: 54px;
}

.big-wide span {
    width: 48px;
    white-space: normal;
}

.big:disabled,
.small:disabled {
    color: #838383;
}

.pin-big {
    color: #a9b6ca;
}

.caret {
    color: #222;
}

.paste {
    width: 50px;
}

.stack {
    display: flex;
    flex-direction: column;
    align-items: flex-start;
    padding-top: 2px;
}

.small {
    display: flex;
    align-items: center;
    gap: 3px;
    height: 22px;
    padding: 0 3px 0 4px;
    white-space: nowrap;
}

.small .caret {
    margin: 0 0 0 2px;
}

.stack-loose {
    gap: 3px;
    padding-top: 4px;
}

.inner-line {
    width: 1px;
    height: 55px;
    margin: 13px 4px 0;
    background: #e2e3e4;
}

/* Address row */
.address-row {
    display: flex;
    align-items: center;
    padding: 5px 12px 7px 12px;
}

.history {
    display: flex;
    align-items: center;
    justify-content: space-between;
    width: 87px;
    margin-right: 7px;
}

.address {
    display: flex;
    flex: 1;
    align-items: center;
    height: 31px;
    padding-left: 2px;
    border: 1px solid #d9d9d9;
    color: #000;
}

.crumb-sep {
    margin: 0 9px 0 7px;
}

.address-drop {
    margin: 0 9px 0 auto;
}

.address-refresh {
    display: grid;
    place-items: center;
    align-self: stretch;
    width: 31px;
    border-left: 1px solid #d9d9d9;
}

.search {
    display: flex;
    align-items: center;
    gap: 13px;
    width: 342px;
    height: 31px;
    margin-left: 12px;
    padding-left: 14px;
    border: 1px solid #d9d9d9;
}

.search input {
    flex: 1;
    min-width: 0;
    padding: 0;
    border: none;
    outline: none;
    background: none;
    font: inherit;
}

.search input::placeholder {
    color: #6d6d6d;
}

/* Navigation and files */
.content {
    display: flex;
    flex: 1;
    min-height: 0;
}

.tree {
    width: 159px;
    padding: 15px 2px 0 0;
    border-right: 1px solid #f3f3f3;
    color: #000;
}

.tree a {
    display: flex;
    align-items: center;
    gap: 5px;
    height: 24px;
    padding-left: 32px;
    overflow: hidden;
    white-space: nowrap;
}

.tree .root {
    padding-left: 24px;
}

.tree .spaced {
    margin-top: 8px;
}

.tree .current {
    background: #d9d9d9;
}

.pin {
    margin: 0 3px 0 auto;
    color: #8c98a4;
}

.files {
    flex: 1;
    padding-right: 7px;
}

table {
    width: 100%;
    table-layout: fixed;
    border-collapse: separate;
    border-spacing: 0;
    color: #6d6d6d;
}

.c-lead { width: 15px; }
.c-name { width: 258px; }
.c-date { width: 144px; }
.c-type { width: 120px; }
.c-size { width: 76px; }
.c-gap { width: 4px; }

th {
    font-weight: normal;
    text-align: left;
}

td,
th {
    height: 21px;
    padding: 0 0 0 6px;
    white-space: nowrap;
}

td:first-child,
td:nth-child(6),
td:nth-child(7) {
    padding: 0;
}

thead th {
    position: relative;
    height: 27px;
    border-right: 1px solid #e5e5e5;
    color: #4c607a;
}

thead .no-line {
    border: none;
}

thead .line {
    border-right: 1px solid #e5e5e5;
}

thead th:nth-child(2) {
    padding-left: 3px;
}

.sort {
    position: absolute;
    top: 0;
    left: calc(50% - 4px);
}

.date-group th {
    height: 32px;
    padding: 0 0 0 7px;
}

.date-first th {
    height: 34px;
    padding-top: 3px;
}

.date-group div {
    display: flex;
    align-items: center;
    gap: 3px;
    font-size: 15px;
    color: #1e3287;
}

.date-group div::after {
    content: "";
    flex: 1;
    height: 1px;
    margin-left: 4px;
    background: #e2e2e2;
}

tbody .name {
    padding-left: 4px;
    color: #000;
}

.name svg {
    display: inline-block;
    margin-right: 4px;
    vertical-align: -4px;
}

.size {
    padding-right: 4px;
    text-align: right;
}

.selected td:nth-child(n+2):nth-child(-n+5) {
    border: 1px solid #99d1ff;
    border-width: 1px 0;
    background: #cce8ff;
}

.selected td.name {
    padding-left: 3px;
    border-left-width: 1px !important;
}

.selected td.size {
    border-right-width: 1px !important;
    padding-right: 3px;
}

/* Status bar */
.status {
    display: flex;
    align-items: center;
    height: 24px;
    padding-left: 14px;
    color: #1e395b;
}

.status-count {
    margin-right: 10px;
    padding-right: 11px;
    border-right: 1px solid #eee;
}

.status-size {
    margin-left: 10px;
    padding-right: 11px;
    border-right: 1px solid #eee;
}

.views {
    display: flex;
    align-items: center;
    gap: 4px;
    margin-left: auto;
    padding-right: 8px;
}

.view-on {
    display: grid;
    place-items: center;
    width: 22px;
    height: 23px;
    border: 1px solid #26a0da;
    background: #cbe8f6;
}

/* Taskbar */
.taskbar {
    position: relative;
    display: flex;
    justify-content: space-between;
    height: 40px;
    background: linear-gradient(to right, #203b47, #1e3848 40%, #1c2d46 75%, #1a2542);
    color: #fff;
}

.task-buttons,
.tray {
    display: flex;
}

.task-buttons button {
    display: grid;
    place-items: center;
    width: 48px;
    margin-right: 1px;
}

.task-buttons button:nth-child(2) {
    margin: 0 3px 0 -1px;
}

.task-buttons .task-active {
    padding-top: 3px;
    border-bottom: 3px solid #76b9ed;
    background: #4b6069;
}

.task-open {
    background: linear-gradient(#76b9ed, #76b9ed) bottom / 40px 3px no-repeat;
}

.tray button {
    display: grid;
    place-items: center;
    width: 24px;
}

.tray .ime {
    font-size: 14px;
    font-weight: 500;
}

.tray .clock {
    width: 72px;
    align-content: center;
    line-height: 19px;
}

.tray .notice {
    width: 40px;
}

.tray .peek {
    width: 5px;
    margin-left: 8px;
    border-left: 1px solid #6b7689;
}
```
